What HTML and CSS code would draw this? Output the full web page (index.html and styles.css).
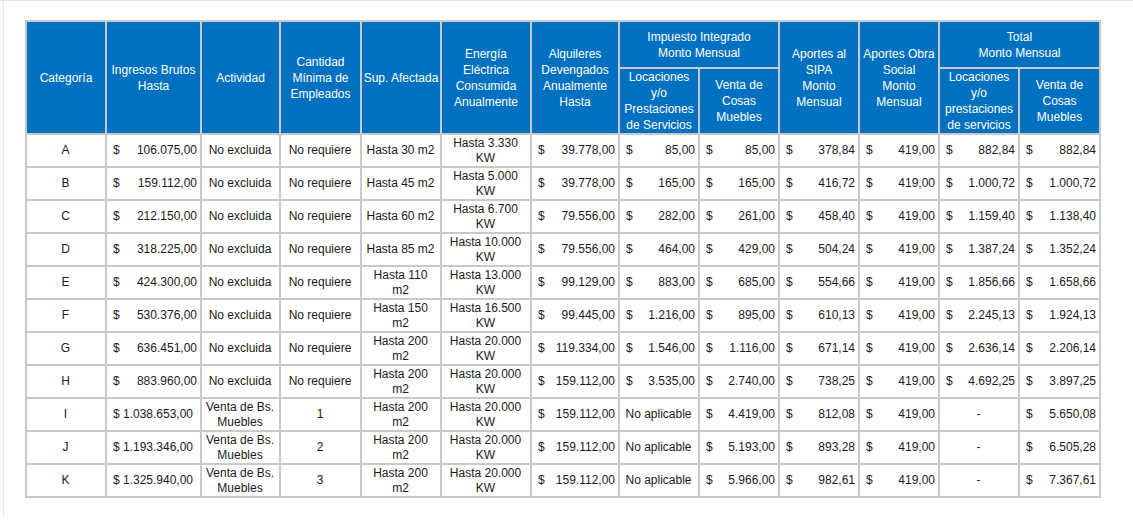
FILE: index.html
```html
<!DOCTYPE html>
<html lang="es">
<head>
<meta charset="utf-8">
<title>Monotributo - Categorías</title>
<link rel="stylesheet" href="styles.css">
</head>
<body>
<div class="page">
  <div class="frame">
    <table class="cat">
      <colgroup>
        <col class="c1"><col class="c2"><col class="c3"><col class="c4"><col class="c5"><col class="c6"><col class="c7">
        <col class="c8"><col class="c9"><col class="c10"><col class="c11"><col class="c12"><col class="c13">
      </colgroup>
      <thead>
        <tr class="h1">
          <th rowspan="2">Categoría</th>
          <th rowspan="2">Ingresos Brutos Hasta</th>
          <th rowspan="2">Actividad</th>
          <th rowspan="2">Cantidad Mínima de Empleados</th>
          <th rowspan="2">Sup. Afectada</th>
          <th rowspan="2">Energía Eléctrica Consumida Anualmente</th>
          <th rowspan="2">Alquileres Devengados Anualmente Hasta</th>
          <th colspan="2">Impuesto Integrado<br>Monto Mensual</th>
          <th rowspan="2">Aportes al SIPA<br>Monto Mensual</th>
          <th rowspan="2">Aportes Obra Social<br>Monto Mensual</th>
          <th colspan="2">Total<br>Monto Mensual</th>
        </tr>
        <tr class="h2">
          <th>Locaciones y/o Prestaciones de Servicios</th>
          <th>Venta de Cosas Muebles</th>
          <th>Locaciones y/o prestaciones de servicios</th>
          <th>Venta de Cosas Muebles</th>
        </tr>
      </thead>
      <tbody>
        <tr>
          <td>A</td>
          <td><div class="acc"><span>$</span><span>106.075,00</span></div></td>
          <td>No excluida</td><td>No requiere</td><td>Hasta 30 m2</td><td>Hasta 3.330 KW</td>
          <td><div class="acc"><span>$</span><span>39.778,00</span></div></td>
          <td><div class="acc"><span>$</span><span>85,00</span></div></td>
          <td><div class="acc"><span>$</span><span>85,00</span></div></td>
          <td><div class="acc"><span>$</span><span>378,84</span></div></td>
          <td><div class="acc"><span>$</span><span>419,00</span></div></td>
          <td><div class="acc"><span>$</span><span>882,84</span></div></td>
          <td><div class="acc"><span>$</span><span>882,84</span></div></td>
        </tr>
        <tr>
          <td>B</td>
          <td><div class="acc"><span>$</span><span>159.112,00</span></div></td>
          <td>No excluida</td><td>No requiere</td><td>Hasta 45 m2</td><td>Hasta 5.000 KW</td>
          <td><div class="acc"><span>$</span><span>39.778,00</span></div></td>
          <td><div class="acc"><span>$</span><span>165,00</span></div></td>
          <td><div class="acc"><span>$</span><span>165,00</span></div></td>
          <td><div class="acc"><span>$</span><span>416,72</span></div></td>
          <td><div class="acc"><span>$</span><span>419,00</span></div></td>
          <td><div class="acc"><span>$</span><span>1.000,72</span></div></td>
          <td><div class="acc"><span>$</span><span>1.000,72</span></div></td>
        </tr>
        <tr>
          <td>C</td>
          <td><div class="acc"><span>$</span><span>212.150,00</span></div></td>
          <td>No excluida</td><td>No requiere</td><td>Hasta 60 m2</td><td>Hasta 6.700 KW</td>
          <td><div class="acc"><span>$</span><span>79.556,00</span></div></td>
          <td><div class="acc"><span>$</span><span>282,00</span></div></td>
          <td><div class="acc"><span>$</span><span>261,00</span></div></td>
          <td><div class="acc"><span>$</span><span>458,40</span></div></td>
          <td><div class="acc"><span>$</span><span>419,00</span></div></td>
          <td><div class="acc"><span>$</span><span>1.159,40</span></div></td>
          <td><div class="acc"><span>$</span><span>1.138,40</span></div></td>
        </tr>
        <tr>
          <td>D</td>
          <td><div class="acc"><span>$</span><span>318.225,00</span></div></td>
          <td>No excluida</td><td>No requiere</td><td>Hasta 85 m2</td><td>Hasta 10.000 KW</td>
          <td><div class="acc"><span>$</span><span>79.556,00</span></div></td>
          <td><div class="acc"><span>$</span><span>464,00</span></div></td>
          <td><div class="acc"><span>$</span><span>429,00</span></div></td>
          <td><div class="acc"><span>$</span><span>504,24</span></div></td>
          <td><div class="acc"><span>$</span><span>419,00</span></div></td>
          <td><div class="acc"><span>$</span><span>1.387,24</span></div></td>
          <td><div class="acc"><span>$</span><span>1.352,24</span></div></td>
        </tr>
        <tr>
          <td>E</td>
          <td><div class="acc"><span>$</span><span>424.300,00</span></div></td>
          <td>No excluida</td><td>No requiere</td><td>Hasta 110 m2</td><td>Hasta 13.000 KW</td>
          <td><div class="acc"><span>$</span><span>99.129,00</span></div></td>
          <td><div class="acc"><span>$</span><span>883,00</span></div></td>
          <td><div class="acc"><span>$</span><span>685,00</span></div></td>
          <td><div class="acc"><span>$</span><span>554,66</span></div></td>
          <td><div class="acc"><span>$</span><span>419,00</span></div></td>
          <td><div class="acc"><span>$</span><span>1.856,66</span></div></td>
          <td><div class="acc"><span>$</span><span>1.658,66</span></div></td>
        </tr>
        <tr>
          <td>F</td>
          <td><div class="acc"><span>$</span><span>530.376,00</span></div></td>
          <td>No excluida</td><td>No requiere</td><td>Hasta 150 m2</td><td>Hasta 16.500 KW</td>
          <td><div class="acc"><span>$</span><span>99.445,00</span></div></td>
          <td><div class="acc"><span>$</span><span>1.216,00</span></div></td>
          <td><div class="acc"><span>$</span><span>895,00</span></div></td>
          <td><div class="acc"><span>$</span><span>610,13</span></div></td>
          <td><div class="acc"><span>$</span><span>419,00</span></div></td>
          <td><div class="acc"><span>$</span><span>2.245,13</span></div></td>
          <td><div class="acc"><span>$</span><span>1.924,13</span></div></td>
        </tr>
        <tr>
          <td>G</td>
          <td><div class="acc"><span>$</span><span>636.451,00</span></div></td>
          <td>No excluida</td><td>No requiere</td><td>Hasta 200 m2</td><td>Hasta 20.000 KW</td>
          <td><div class="acc"><span>$</span><span>119.334,00</span></div></td>
          <td><div class="acc"><span>$</span><span>1.546,00</span></div></td>
          <td><div class="acc"><span>$</span><span>1.116,00</span></div></td>
          <td><div class="acc"><span>$</span><span>671,14</span></div></td>
          <td><div class="acc"><span>$</span><span>419,00</span></div></td>
          <td><div class="acc"><span>$</span><span>2.636,14</span></div></td>
          <td><div class="acc"><span>$</span><span>2.206,14</span></div></td>
        </tr>
        <tr>
          <td>H</td>
          <td><div class="acc"><span>$</span><span>883.960,00</span></div></td>
          <td>No excluida</td><td>No requiere</td><td>Hasta 200 m2</td><td>Hasta 20.000 KW</td>
          <td><div class="acc"><span>$</span><span>159.112,00</span></div></td>
          <td><div class="acc"><span>$</span><span>3.535,00</span></div></td>
          <td><div class="acc"><span>$</span><span>2.740,00</span></div></td>
          <td><div class="acc"><span>$</span><span>738,25</span></div></td>
          <td><div class="acc"><span>$</span><span>419,00</span></div></td>
          <td><div class="acc"><span>$</span><span>4.692,25</span></div></td>
          <td><div class="acc"><span>$</span><span>3.897,25</span></div></td>
        </tr>
        <tr>
          <td>I</td>
          <td>$ 1.038.653,00</td>
          <td>Venta de Bs. Muebles</td><td>1</td><td>Hasta 200 m2</td><td>Hasta 20.000 KW</td>
          <td><div class="acc"><span>$</span><span>159.112,00</span></div></td>
          <td>No aplicable</td>
          <td><div class="acc"><span>$</span><span>4.419,00</span></div></td>
          <td><div class="acc"><span>$</span><span>812,08</span></div></td>
          <td><div class="acc"><span>$</span><span>419,00</span></div></td>
          <td>-</td>
          <td><div class="acc"><span>$</span><span>5.650,08</span></div></td>
        </tr>
        <tr>
          <td>J</td>
          <td>$ 1.193.346,00</td>
          <td>Venta de Bs. Muebles</td><td>2</td><td>Hasta 200 m2</td><td>Hasta 20.000 KW</td>
          <td><div class="acc"><span>$</span><span>159.112,00</span></div></td>
          <td>No aplicable</td>
          <td><div class="acc"><span>$</span><span>5.193,00</span></div></td>
          <td><div class="acc"><span>$</span><span>893,28</span></div></td>
          <td><div class="acc"><span>$</span><span>419,00</span></div></td>
          <td>-</td>
          <td><div class="acc"><span>$</span><span>6.505,28</span></div></td>
        </tr>
        <tr>
          <td>K</td>
          <td>$ 1.325.940,00</td>
          <td>Venta de Bs. Muebles</td><td>3</td><td>Hasta 200 m2</td><td>Hasta 20.000 KW</td>
          <td><div class="acc"><span>$</span><span>159.112,00</span></div></td>
          <td>No aplicable</td>
          <td><div class="acc"><span>$</span><span>5.966,00</span></div></td>
          <td><div class="acc"><span>$</span><span>982,61</span></div></td>
          <td><div class="acc"><span>$</span><span>419,00</span></div></td>
          <td>-</td>
          <td><div class="acc"><span>$</span><span>7.367,61</span></div></td>
        </tr>
      </tbody>
    </table>
  </div>
</div>
</body>
</html>
```
FILE: styles.css
```css
html, body {
  margin: 0;
  padding: 0;
  background: #ffffff;
}

body {
  font-family: "Liberation Sans", Arial, sans-serif;
  font-size: 12px;
  color: #1a1a1a;
}

.page {
  border-top: 1px solid #dde2e9;
  height: 522px;
}

.frame {
  margin-left: 3px;
  border-left: 1px solid #e6e9ee;
  height: 516px;
  padding: 19px 0 0 21px;
  box-sizing: border-box;
}

.cat {
  table-layout: fixed;
  width: 1076px;
  border-collapse: separate;
  border-spacing: 0;
  border-left: 2px solid #c9c9c9;
  border-top: 2px solid #c9c9c9;
}

.c1 { width: 80px; }
.c2 { width: 95px; }
.c3 { width: 79px; }
.c4 { width: 81px; }
.c5 { width: 80px; }
.c6 { width: 90px; }
.c7 { width: 88px; }
.c8 { width: 80px; }
.c9 { width: 80px; }
.c10 { width: 80px; }
.c11 { width: 80px; }
.c12 { width: 80px; }
.c13 { width: 81px; }

.cat th,
.cat td {
  border-right: 2px solid #c9c9c9;
  border-bottom: 2px solid #c9c9c9;
  text-align: center;
  vertical-align: middle;
  overflow: hidden;
}

.cat th {
  background: #0070c0;
  color: #ffffff;
  font-weight: normal;
  line-height: 16px;
  padding: 0 1px;
}

.h1 { height: 47px; }
.h2 { height: 65px; }

.cat td {
  line-height: 15px;
  height: 31px;
  padding: 0 3px 0 2px;
  box-sizing: border-box;
}

.cat tbody tr { height: 33px; }

.acc {
  display: flex;
  justify-content: space-between;
  padding-left: 4px;
}
```
